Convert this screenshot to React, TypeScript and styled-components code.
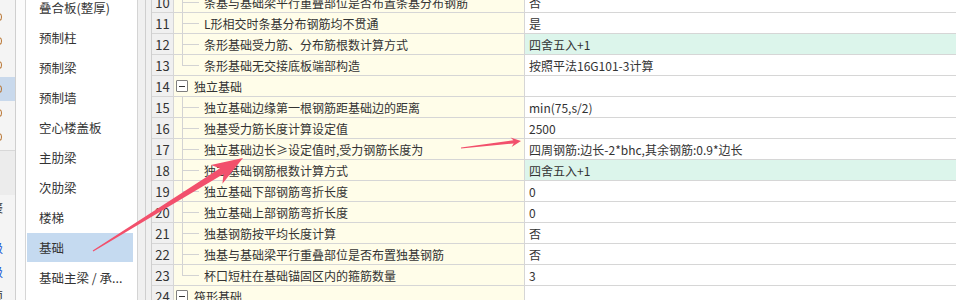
import React from "react";
import styled, { createGlobalStyle } from "styled-components";

const Global = createGlobalStyle`
  html, body { margin: 0; padding: 0; background: #fff; }
  body { overflow: hidden; }
`;

const Page = styled.div`
  position: relative;
  display: flex;
  width: 956px;
  height: 300px;
  overflow: hidden;
  background: #fff;
  font-family: "Noto Sans CJK SC", "Noto Sans", sans-serif;
  color: #333;
`;

const LeftStrip = styled.div`
  flex: none;
  width: 15px;
  height: 100%;
  background: #f4f4f4;
  border-right: 1px solid #cfcfcf;
  display: flex;
  flex-direction: column;
  overflow: hidden;
  padding-top: 5px;
  box-sizing: content-box;
`;

const StripItem = styled.div<{ $sel?: boolean }>`
  flex: none;
  height: 24px;
  display: flex;
  align-items: center;
  background: ${(p) => (p.$sel ? "#c9d9ec" : "transparent")};
`;

const StripIcon = styled.span`
  display: block;
  width: 6px;
  height: 8px;
  margin-left: -4px;
  border: 1.5px solid #b8732f;
  border-radius: 50%;
  box-sizing: border-box;
`;

const StripSection = styled.div`
  flex: none;
  height: 44px;
  margin-top: 1px;
  border-top: 1px solid #d8d8d8;
  background: #ececec;
`;

const StripText = styled.div<{ $blue?: boolean; $h: number }>`
  flex: none;
  height: ${(p) => p.$h}px;
  display: flex;
  align-items: center;
  margin-left: -9px;
  font-size: 12px;
  white-space: nowrap;
  color: ${(p) => (p.$blue ? "#2457d6" : "#333")};
`;

const Gap = styled.div`
  flex: none;
  width: 9px;
  height: 100%;
  background: #fbfbfb;
  border-right: 1px solid #d6d6d6;
`;

const Sidebar = styled.div`
  flex: none;
  width: 111px;
  height: 100%;
  background: #fff;
  border-right: 1px solid #d4d4d4;
  overflow: hidden;
`;

const SideList = styled.div`
  margin-top: -7px;
  display: flex;
  flex-direction: column;
`;

const SideItem = styled.div<{ $sel?: boolean }>`
  height: 29px;
  margin: 0 4px 1px 1px;
  padding-left: 12px;
  display: flex;
  align-items: center;
  font-size: 12.5px;
  white-space: nowrap;
  color: #333;
  background: ${(p) => (p.$sel ? "#c5daf0" : "transparent")};
`;

const Splitter = styled.div<{ $w: number }>`
  flex: none;
  width: ${(p) => p.$w}px;
  height: 100%;
  background: #f0f0f0;
  border-right: 1px solid #cfcfcf;
`;

const Table = styled.div`
  flex: 1;
  min-width: 0;
  display: flex;
  flex-direction: column;
  margin-top: -8px;
`;

const Row = styled.div`
  flex: none;
  display: grid;
  grid-template-columns: 22px 351px 1fr;
  height: 21px;
  box-sizing: border-box;
  border-bottom: 1px solid #d6d6d6;
`;

const NumCell = styled.div`
  background: #f0f0f0;
  border-right: 1px solid #d6d6d6;
  display: flex;
  align-items: center;
  justify-content: center;
  font-size: 13px;
  color: #333;
`;

const TreeCell = styled.div`
  background: #fffde9;
  border-right: 1px solid #d6d6d6;
  display: flex;
  align-items: stretch;
  font-size: 12px;
  white-space: nowrap;
  overflow: hidden;
`;

const Guide = styled.div`
  flex: none;
  width: 17px;
  margin-left: 8px;
  margin-right: 5px;
  display: flex;
  flex-direction: column;
`;

const GuideTop = styled.div`
  height: 10px;
  border-left: 1px solid #d3d3d3;
  border-bottom: 1px solid #d3d3d3;
`;

const GuideBottom = styled.div<{ $last?: boolean }>`
  flex: 1;
  border-left: 1px solid ${(p) => (p.$last ? "transparent" : "#d3d3d3")};
`;

const Label = styled.span`
  display: flex;
  align-items: center;
`;

const Toggle = styled.span`
  flex: none;
  align-self: center;
  width: 12px;
  height: 12px;
  margin: 0 6px 0 2px;
  border: 1px solid #7f7f7f;
  border-radius: 1px;
  box-sizing: border-box;
  display: flex;
  align-items: center;
  justify-content: center;
  background: #fff;
  &::after {
    content: "";
    width: 6px;
    height: 1px;
    background: #333;
  }
`;

const ValueCell = styled.div<{ $green?: boolean }>`
  background: ${(p) => (p.$green ? "#dcf5eb" : "#fff")};
  display: flex;
  align-items: center;
  padding-left: 4px;
  font-size: 12px;
  white-space: nowrap;
  overflow: hidden;
`;

const Overlay = styled.svg`
  position: absolute;
  left: 0;
  top: 0;
  width: 956px;
  height: 300px;
  pointer-events: none;
`;

type RowData = {
  n: number;
  label: string;
  value?: string;
  group?: boolean;
  last?: boolean;
  green?: boolean;
};

const rows: RowData[] = [
  { n: 10, label: "条基与基础梁平行重叠部位是否布置条基分布钢筋", value: "否" },
  { n: 11, label: "L形相交时条基分布钢筋均不贯通", value: "是" },
  { n: 12, label: "条形基础受力筋、分布筋根数计算方式", value: "四舍五入+1", green: true },
  { n: 13, label: "条形基础无交接底板端部构造", value: "按照平法16G101-3计算", last: true },
  { n: 14, label: "独立基础", group: true },
  { n: 15, label: "独立基础边缘第一根钢筋距基础边的距离", value: "min(75,s/2)" },
  { n: 16, label: "独基受力筋长度计算设定值", value: "2500" },
  { n: 17, label: "独立基础边长≥设定值时,受力钢筋长度为", value: "四周钢筋:边长-2*bhc,其余钢筋:0.9*边长" },
  { n: 18, label: "独立基础钢筋根数计算方式", value: "四舍五入+1", green: true },
  { n: 19, label: "独立基础下部钢筋弯折长度", value: "0" },
  { n: 20, label: "独立基础上部钢筋弯折长度", value: "0" },
  { n: 21, label: "独基钢筋按平均长度计算", value: "否" },
  { n: 22, label: "独基与基础梁平行重叠部位是否布置独基钢筋", value: "否" },
  { n: 23, label: "杯口短柱在基础锚固区内的箍筋数量", value: "3", last: true },
  { n: 24, label: "筏形基础", group: true },
];

const sideItems = [
  "叠合板(整厚)",
  "预制柱",
  "预制梁",
  "预制墙",
  "空心楼盖板",
  "主肋梁",
  "次肋梁",
  "楼梯",
  "基础",
  "基础主梁 / 承...",
];

type P = [number, number];

function arrowPoints(tail: P, tip: P, headLen: number, headHalf: number, neckBack: number, neckHalf: number, tailHalf: number): string {
  const dx = tip[0] - tail[0];
  const dy = tip[1] - tail[1];
  const len = Math.hypot(dx, dy);
  const ux = dx / len;
  const uy = dy / len;
  const nx = -uy;
  const ny = ux;
  const at = (back: number, side: number): P => [
    tip[0] - ux * back + nx * side,
    tip[1] - uy * back + ny * side,
  ];
  const pts: P[] = [
    [tail[0] + nx * tailHalf, tail[1] + ny * tailHalf],
    at(neckBack, neckHalf),
    at(headLen, headHalf),
    tip,
    at(headLen, -headHalf),
    at(neckBack, -neckHalf),
    [tail[0] - nx * tailHalf, tail[1] - ny * tailHalf],
  ];
  return pts.map((p) => `${p[0].toFixed(1)},${p[1].toFixed(1)}`).join(" ");
}

export default function App() {
  return (
    <>
      <Global />
      <Page>
        <LeftStrip>
          <StripItem><StripIcon /></StripItem>
          <StripItem><StripIcon /></StripItem>
          <StripItem><StripIcon /></StripItem>
          <StripItem $sel><StripIcon /></StripItem>
          <StripItem><StripIcon /></StripItem>
          <StripItem><StripIcon /></StripItem>
          <StripSection />
          <StripText $h={24}>褒</StripText>
          <StripText $h={16} />
          <StripText $h={24} $blue>级</StripText>
          <StripText $h={24} $blue>级</StripText>
          <StripText $h={24}>须</StripText>
        </LeftStrip>
        <Gap />
        <Sidebar>
          <SideList>
            {sideItems.map((s) => (
              <SideItem key={s} $sel={s === "基础"}>
                {s}
              </SideItem>
            ))}
          </SideList>
        </Sidebar>
        <Splitter $w={7} />
        <Splitter $w={5} />
        <Table>
          {rows.map((r) => (
            <Row key={r.n}>
              <NumCell>{r.n}</NumCell>
              <TreeCell>
                {r.group ? (
                  <Toggle />
                ) : (
                  <Guide>
                    <GuideTop />
                    <GuideBottom $last={r.last} />
                  </Guide>
                )}
                <Label>{r.label}</Label>
              </TreeCell>
              <ValueCell $green={r.green}>{r.value ?? ""}</ValueCell>
            </Row>
          ))}
        </Table>
        <Overlay viewBox="0 0 956 300">
          <polygon
            points={arrowPoints([93, 251], [243, 158], 31, 11, 25, 3.4, 0.6)}
            fill="#f2506c"
          />
          <polygon
            points={arrowPoints([461, 148], [521, 141], 10, 4.8, 7.5, 1.6, 0.4)}
            fill="#f2506c"
          />
        </Overlay>
      </Page>
    </>
  );
}
